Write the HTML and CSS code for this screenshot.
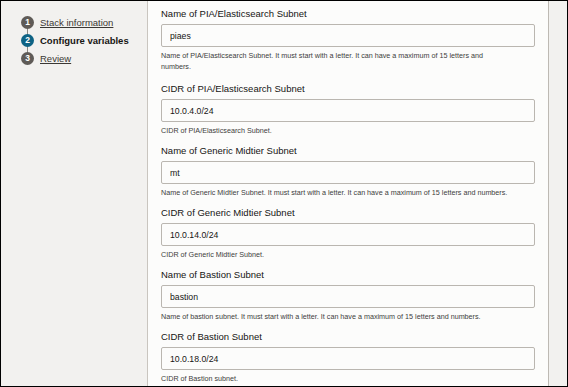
FILE: index.html
```html
<!DOCTYPE html>
<html lang="en">
<head>
    <meta charset="UTF-8">
    <title>Configure variables</title>
    <link rel="stylesheet" href="styles.css">
</head>
<body>
    <div class="frame">
        <nav class="steps">
            <div class="step done">
                <span class="num">1</span>
                <a href="#" class="step-link">Stack information</a>
            </div>
            <div class="step active">
                <span class="num">2</span>
                <span class="step-link">Configure variables</span>
            </div>
            <div class="step">
                <span class="num">3</span>
                <a href="#" class="step-link">Review</a>
            </div>
        </nav>

        <main class="content">
            <div class="field">
                <label class="label">Name of PIA/Elasticsearch Subnet</label>
                <input class="input" type="text" value="piaes">
                <p class="help">Name of PIA/Elasticsearch Subnet. It must start with a letter. It can have a maximum of 15 letters and numbers.</p>
            </div>
            <div class="field">
                <label class="label">CIDR of PIA/Elasticsearch Subnet</label>
                <input class="input" type="text" value="10.0.4.0/24">
                <p class="help">CIDR of PIA/Elasticsearch Subnet.</p>
            </div>
            <div class="field">
                <label class="label">Name of Generic Midtier Subnet</label>
                <input class="input" type="text" value="mt">
                <p class="help">Name of Generic Midtier Subnet. It must start with a letter. It can have a maximum of 15 letters and numbers.</p>
            </div>
            <div class="field">
                <label class="label">CIDR of Generic Midtier Subnet</label>
                <input class="input" type="text" value="10.0.14.0/24">
                <p class="help">CIDR of Generic Midtier Subnet.</p>
            </div>
            <div class="field">
                <label class="label">Name of Bastion Subnet</label>
                <input class="input" type="text" value="bastion">
                <p class="help">Name of bastion subnet. It must start with a letter. It can have a maximum of 15 letters and numbers.</p>
            </div>
            <div class="field">
                <label class="label">CIDR of Bastion Subnet</label>
                <input class="input" type="text" value="10.0.18.0/24">
                <p class="help">CIDR of Bastion subnet.</p>
            </div>
        </main>

        <div class="gutter"></div>
    </div>
</body>
</html>
```

FILE: styles.css
```css
/* General Styling */
* {
    margin: 0;
    padding: 0;
    box-sizing: border-box;
    font-family: 'Liberation Sans', Arial, sans-serif;
}

body {
    width: 568px;
    height: 387px;
    overflow: hidden;
    background: #f2f1ef;
}

.frame {
    display: flex;
    height: 387px;
    border: 1px solid #000;
    background: #f2f1ef;
}

/* Steps sidebar */
.steps {
    width: 147px;
    flex-shrink: 0;
    padding: 12px 0 0 20px;
    border-right: 1px solid #c9c5bf;
}

.step {
    display: flex;
    align-items: center;
    height: 18px;
    position: relative;
}

.step + .step::before {
    content: "";
    position: absolute;
    left: 6px;
    top: -6px;
    width: 1px;
    height: 12px;
    background: #8b8782;
}

.step .num {
    width: 13px;
    height: 13px;
    border-radius: 50%;
    background: #5f5b57;
    color: #fff;
    font-size: 8.5px;
    font-weight: 700;
    display: flex;
    align-items: center;
    justify-content: center;
    margin-right: 6px;
    position: relative;
    z-index: 1;
}

.step.active .num {
    background: #0e6384;
}

.step-link {
    font-size: 9.5px;
    color: #3b3834;
    text-decoration: underline;
}

.step.active .step-link {
    color: #161513;
    font-weight: 700;
    text-decoration: none;
}

/* Form area */
.content {
    width: 401px;
    flex-shrink: 0;
    background: #fcfcfb;
    border-right: 1px solid #bdb9b3;
    padding: 7px 13px 0 13px;
    overflow: hidden;
}

.field {
    margin-bottom: 9px;
}

.field:first-child {
    margin-bottom: 11px;
}

.label {
    display: block;
    font-size: 9.5px;
    line-height: 12px;
    color: #161513;
    margin-bottom: 4px;
}

.input {
    display: block;
    width: 100%;
    height: 23px;
    border: 1px solid #bab6b0;
    border-radius: 2px;
    background: #fcfcfb;
    padding-left: 8px;
    font-size: 8.7px;
    color: #161513;
    outline: none;
}

.help {
    margin-top: 3px;
    font-size: 7.2px;
    line-height: 11px;
    color: #3c3c3c;
    padding-right: 22px;
}

.gutter {
    flex: 1;
    background: #f2f1ef;
}
```
